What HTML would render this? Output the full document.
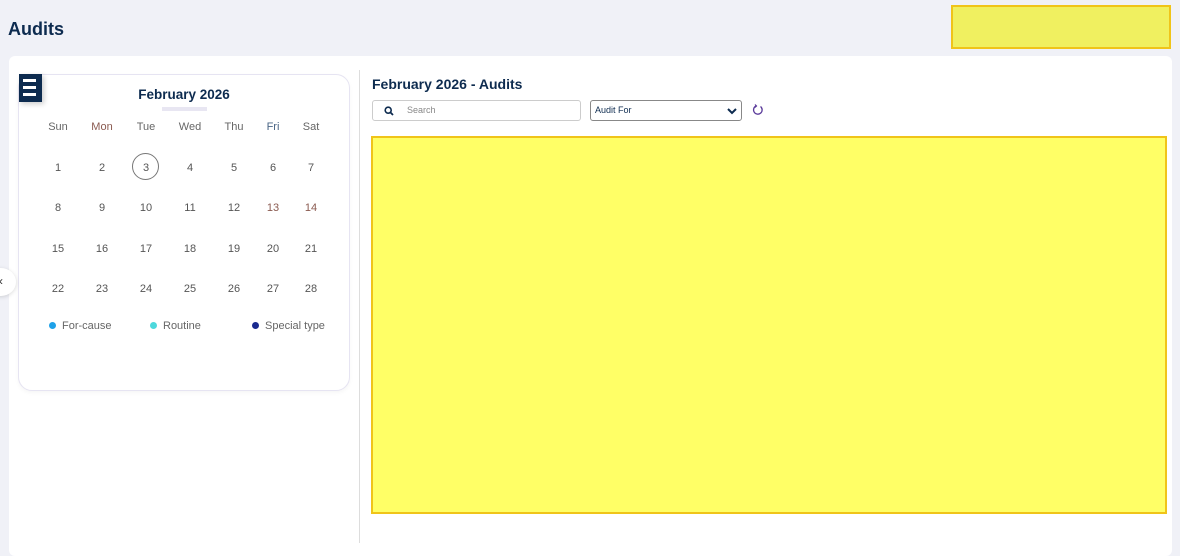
<!DOCTYPE html>
<html><head><style>
*{margin:0;padding:0;box-sizing:border-box}
body{width:1180px;height:543px;background:#f0f1f7;font-family:"Liberation Sans",sans-serif;position:relative;overflow:hidden}
.abs{position:absolute}
h1{position:absolute;left:8px;top:19px;font-size:18px;color:#0d2b4f;font-weight:bold}
.ybox{left:951px;top:5px;width:220px;height:44px;background:#f0f060;border:2px solid #f0c419}
.panel{left:9px;top:56px;width:1163px;height:500px;background:#fff;border-radius:6px}
.div{left:359px;top:70px;width:1px;height:473px;background:#ddd}
.cal{left:18px;top:74px;width:332px;height:317px;border:1px solid #e6e4f2;border-radius:14px;background:#fff;box-shadow:0 2px 4px rgba(0,0,0,.04)}
.menu{left:19px;top:74px;width:23px;height:28px;background:#0d2b4f;box-shadow:2px 2px 5px rgba(0,0,0,.2)}
.menu i{position:absolute;left:4px;width:13px;height:3px;background:#fff}
.t{position:absolute;transform:translateX(-50%);font-size:11px;color:#555;white-space:nowrap}
.hd{color:#666}
.title{left:184px;top:87px;font-size:13.5px;font-weight:bold;color:#0d2b4f}
.bar{left:162px;top:107px;width:45px;height:4px;background:#e8e6f2}
.circ{left:132px;top:153px;width:27px;height:27px;border:1px solid #777;border-radius:50%}
.leg{position:absolute;font-size:11px;color:#666}
.leg b{display:inline-block;width:7px;height:7px;border-radius:50%;margin-right:6px;vertical-align:0px}
.arrow{left:-14px;top:268px;width:30px;height:28px;border-radius:50%;background:#fff;box-shadow:0 1px 4px rgba(0,0,0,.15);font-size:12px;color:#333;padding-left:13px;line-height:27px}
.h2{left:372px;top:76px;font-size:14px;font-weight:bold;color:#0d2b4f}
.search{left:372px;top:100px;width:209px;height:21px;border:1px solid #ccc;border-radius:3px;font-size:9px;color:#888}
.sel{left:590px;top:100px;width:152px;height:21px;border:1px solid #888;border-radius:3px;font-size:9px;color:#0d2b4f;padding:4px 4px}
.big{left:371px;top:136px;width:796px;height:378px;background:#ffff66;border:2px solid #f0c419}
</style></head><body>
<h1>Audits</h1>
<div class="abs ybox"></div>
<div class="abs panel"></div>
<div class="abs div"></div>
<div class="abs cal"></div>
<div class="abs menu"><i style="top:5px"></i><i style="top:12px"></i><i style="top:19px"></i></div>
<div class="abs t title">February 2026</div>
<div class="abs bar"></div>
<div class="abs circ"></div>
<div class="t hd" style="left:58px;top:121px">Sun</div>
<div class="t hd" style="left:102px;top:121px;color:#8a5a50">Mon</div>
<div class="t hd" style="left:146px;top:121px">Tue</div>
<div class="t hd" style="left:190px;top:121px">Wed</div>
<div class="t hd" style="left:234px;top:121px">Thu</div>
<div class="t hd" style="left:273px;top:121px;color:#4a6585">Fri</div>
<div class="t hd" style="left:311px;top:121px">Sat</div>
<div class="t" style="left:58px;top:162px">1</div><div class="t" style="left:102px;top:162px">2</div><div class="t" style="left:146px;top:162px">3</div><div class="t" style="left:190px;top:162px">4</div><div class="t" style="left:234px;top:162px">5</div><div class="t" style="left:273px;top:162px">6</div><div class="t" style="left:311px;top:162px">7</div>
<div class="t" style="left:58px;top:202px">8</div><div class="t" style="left:102px;top:202px">9</div><div class="t" style="left:146px;top:202px">10</div><div class="t" style="left:190px;top:202px">11</div><div class="t" style="left:234px;top:202px">12</div><div class="t" style="left:273px;top:202px;color:#8a5a50">13</div><div class="t" style="left:311px;top:202px;color:#8a5a50">14</div>
<div class="t" style="left:58px;top:243px">15</div><div class="t" style="left:102px;top:243px">16</div><div class="t" style="left:146px;top:243px">17</div><div class="t" style="left:190px;top:243px">18</div><div class="t" style="left:234px;top:243px">19</div><div class="t" style="left:273px;top:243px">20</div><div class="t" style="left:311px;top:243px">21</div>
<div class="t" style="left:58px;top:283px">22</div><div class="t" style="left:102px;top:283px">23</div><div class="t" style="left:146px;top:283px">24</div><div class="t" style="left:190px;top:283px">25</div><div class="t" style="left:234px;top:283px">26</div><div class="t" style="left:273px;top:283px">27</div><div class="t" style="left:311px;top:283px">28</div>
<div class="leg" style="left:49px;top:320px"><b style="background:#1ea1e8"></b>For-cause</div>
<div class="leg" style="left:150px;top:320px"><b style="background:#4dd8dc"></b>Routine</div>
<div class="leg" style="left:252px;top:320px"><b style="background:#1a2a8f"></b>Special type</div>
<div class="abs arrow">‹</div>
<div class="abs h2">February 2026 - Audits</div>
<div class="abs search"><svg class="abs" style="left:11px;top:5px" width="10" height="10" viewBox="0 0 10 10"><circle cx="4.2" cy="4.2" r="3" fill="none" stroke="#0d2b4f" stroke-width="1.6"/><path d="M6.4 6.4L9 9" stroke="#0d2b4f" stroke-width="1.8"/></svg><span class="abs" style="left:34px;top:4px">Search</span></div>
<div class="abs sel">Audit For<svg class="abs" style="right:4px;top:6px" width="10" height="8" viewBox="0 0 10 8"><path d="M1 2l4 4 4-4" fill="none" stroke="#0d2b4f" stroke-width="2"/></svg></div>
<svg class="abs" style="left:752px;top:103px" width="12" height="13" viewBox="0 0 12 13"><path d="M8.5 3.5A4.3 4.3 0 1 1 4 3" fill="none" stroke="#5a3a9a" stroke-width="1.3"/><path d="M3 1.5l1.5 1.5-1.5 1.5" fill="none" stroke="#5a3a9a" stroke-width="1.2"/></svg>
<div class="abs big"></div>
</body></html>
